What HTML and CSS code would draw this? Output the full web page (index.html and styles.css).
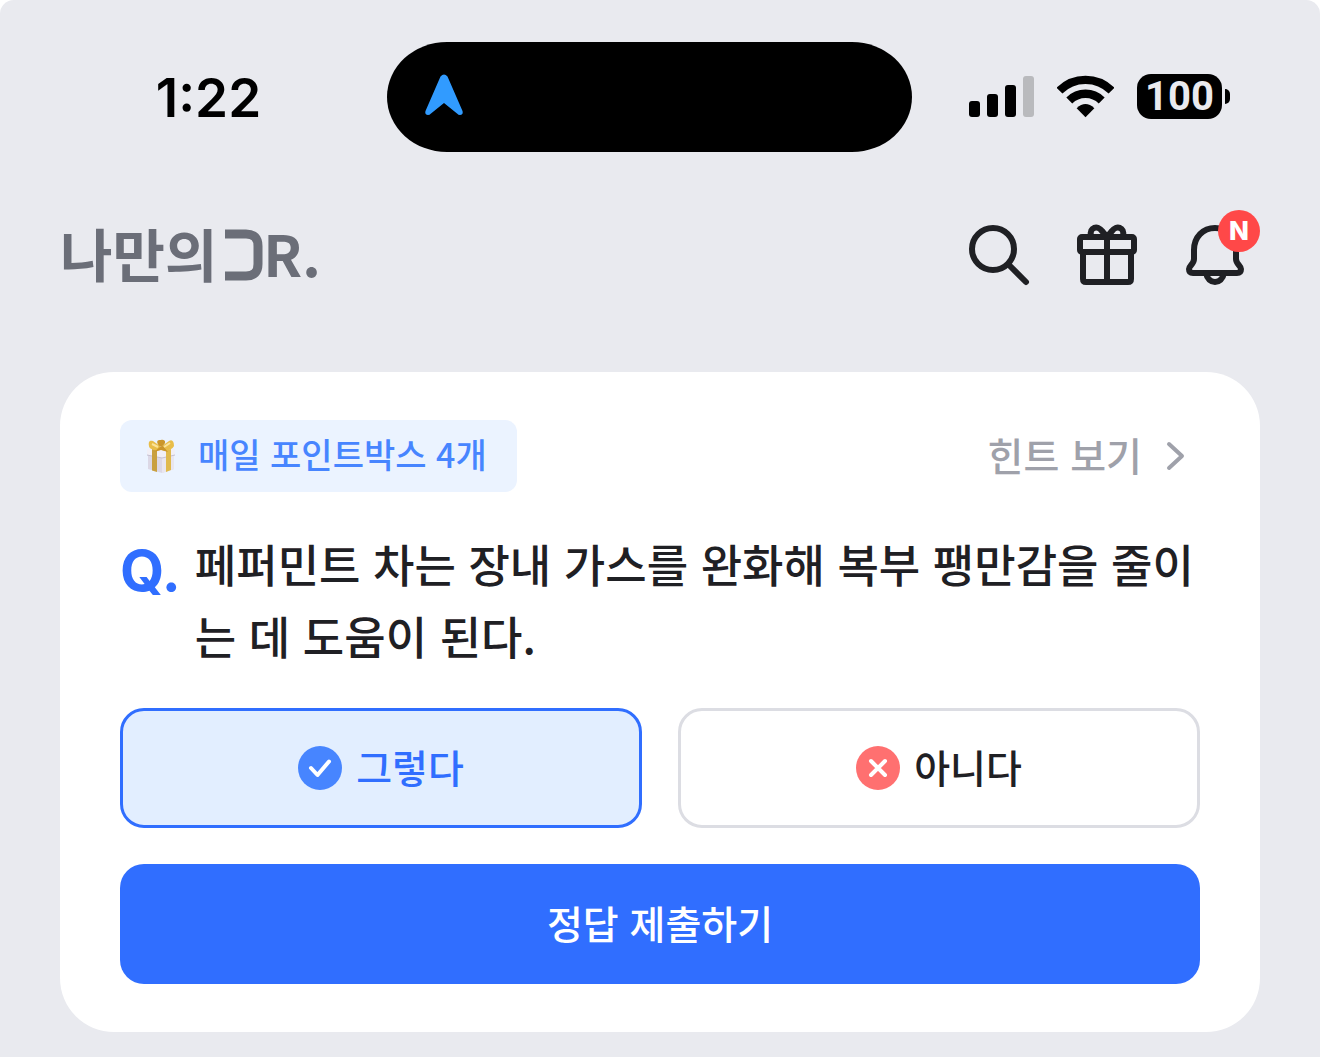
FILE: index.html
```html
<!DOCTYPE html>
<html lang="ko">
<head>
    <meta charset="UTF-8">
    <meta name="viewport" content="width=device-width, initial-scale=1.0">
    <title>나만의DR.</title>
    <link rel="stylesheet" href="styles.css">
</head>
<body>
<div class="screen">

    <!-- Status bar -->
    <div class="status-bar">
        <span class="time">1:22</span>
        <div class="island">
            <svg width="40" height="44" viewBox="0 0 40 44" aria-hidden="true">
                <path d="M16.500 3.500Q20 -0.500 23.500 3.500L38.500 38Q39.500 42 36 42Q34.500 42 33 40.500L20 30L7 40.500Q5.500 42 4 42Q0.500 42 1.500 38Z" fill="#319bff"/>
            </svg>
        </div>
        <div class="status-icons">
            <svg width="65" height="42" viewBox="0 0 65 42" aria-hidden="true">
                <rect x="0" y="26" width="11" height="16" rx="3"/>
                <rect x="18" y="19" width="11" height="23" rx="3"/>
                <rect x="36" y="10" width="11" height="32" rx="3"/>
                <rect x="54" y="1" width="11" height="41" rx="3" fill="#b9babd"/>
            </svg>
            <svg width="57" height="43" viewBox="0 0 58 43" aria-hidden="true">
                <path d="M2.500 15.500A37.500 37.500 0 0 1 55.500 15.500M12.500 25.500A23.300 23.300 0 0 1 45.500 25.500" fill="none" stroke="#000" stroke-width="8.500"/>
                <path d="M29 42.500L20 33.500Q29 25 38 33.500Z"/>
            </svg>
            <div class="battery">
                <span class="battery-level">100</span>
                <span class="battery-tip"></span>
            </div>
        </div>
    </div>

    <!-- App header -->
    <header class="header">
        <a href="#" class="logo">
            <span>나만의</span>
            <svg width="38" height="52" viewBox="0 0 38 52" aria-hidden="true">
                <path d="M0 5H21Q33 5 33 17V35Q33 47 21 47H0" fill="none" stroke="#6b6e78" stroke-width="9"/>
            </svg>
            <span>R.</span>
        </a>
        <nav class="header-menu">
            <button type="button" class="icon-button" aria-label="검색">
                <svg width="72" height="72" viewBox="0 0 72 72">
                    <circle cx="30" cy="30" r="21"/>
                    <path d="M46 46L63 63"/>
                </svg>
            </button>
            <button type="button" class="icon-button" aria-label="선물">
                <svg width="72" height="72" viewBox="0 0 72 72">
                    <rect x="9" y="18" width="54" height="15" rx="2"/>
                    <path d="M12 33V60Q12 63 15 63H57Q60 63 60 60V33M36 18V63"/>
                    <path d="M20 17C18 8 27 6 31 12L36 18L41 12C45 6 54 8 52 17"/>
                </svg>
            </button>
            <button type="button" class="icon-button" aria-label="알림">
                <svg width="72" height="72" viewBox="0 0 72 72">
                    <path d="M36 9C24 9 15 18 15 31V40C15 45 10 47 10 50Q10 54 14 54H58Q62 54 62 50C62 47 57 45 57 40V31C57 18 48 9 36 9Z"/>
                    <path d="M27 54C29 66 43 66 45 54"/>
                </svg>
                <span class="badge">N</span>
            </button>
        </nav>
    </header>

    <!-- Daily quiz -->
    <main class="quiz-card">
        <div class="quiz-top">
            <div class="point-chip">
                <svg width="30" height="36" viewBox="0 0 30 36" aria-hidden="true">
                    <path d="M2 12L15 15L28 12V31L16 35L2 31Z" fill="#dcd8e6"/>
                    <path d="M16 15L28 12V31L16 35Z" fill="#e9e6ef"/>
                    <path d="M1 11L15 8L29 11V17L16 20L1 17Z" fill="#f1eff6"/>
                    <path d="M1 17L16 20L29 17" fill="none" stroke="#c6c1d2"/>
                    <path d="M6 11L11 12V34L6 32.500Z" fill="#c9a040"/>
                    <path d="M20 12L25 11V32L20 34Z" fill="#e0b94c"/>
                    <path d="M14 12C9 13 3 11 3 8C2 3 4 2 7 3L14 8ZM16 12C20 14 27 11 28 8C28 3 26 1 23 3L16 8Z" fill="#e8bd49"/>
                    <path d="M15 9C11 7 9 1 15 2C20 1 21 6 15 9ZM14 9L8 14L15 12L22 14L17 8Z" fill="#cb962a"/>
                    <path d="M6 6L12 9M24 5L18 9" stroke="#fbe39a" stroke-width="2"/>
                </svg>
                <span>매일 포인트박스 4개</span>
            </div>
            <a href="#" class="hint-link">
                <span>힌트 보기</span>
                <svg width="20" height="32" viewBox="0 0 20 32" aria-hidden="true">
                    <path d="M3 4L16 16L3 28" fill="none" stroke="#9fa1aa" stroke-width="4" stroke-linecap="round" stroke-linejoin="round"/>
                </svg>
            </a>
        </div>

        <form class="quiz-form">
            <div class="question">
                <span class="question-mark">Q.</span>
                <p>페퍼민트 차는 장내 가스를 완화해 복부 팽만감을 줄이는 데 도움이 된다.</p>
            </div>

            <div class="answers">
                <input type="radio" id="answer-yes" name="answer" value="yes" checked>
                <label for="answer-yes" class="answer">
                    <svg width="44" height="44" viewBox="0 0 44 44" aria-hidden="true">
                        <circle cx="22" cy="22" r="22" fill="#4785ff"/>
                        <path d="M13 22L19.500 29L31 15.500" fill="none" stroke="#fff" stroke-width="4" stroke-linecap="round" stroke-linejoin="round"/>
                    </svg>
                    <span>그렇다</span>
                </label>
                <input type="radio" id="answer-no" name="answer" value="no">
                <label for="answer-no" class="answer">
                    <svg width="44" height="44" viewBox="0 0 44 44" aria-hidden="true">
                        <circle cx="22" cy="22" r="22" fill="#ff7070"/>
                        <path d="M15 15L29 29M29 15L15 29" stroke="#fff" stroke-width="4" stroke-linecap="round"/>
                    </svg>
                    <span>아니다</span>
                </label>
            </div>

            <button type="submit" class="submit-button">정답 제출하기</button>
        </form>
    </main>

</div>
</body>
</html>
```

FILE: styles.css
```css
* {
    box-sizing: border-box;
}

body {
    margin: 0;
    background-color: #fff;
    color: #1f2024;
    font-family: "Noto Sans CJK KR", sans-serif;
    font-weight: 500;
}

a {
    color: inherit;
    text-decoration: none;
}

button {
    padding: 0;
    border: none;
    background: none;
    font: inherit;
    cursor: pointer;
}

svg {
    display: block;
    flex-shrink: 0;
}

.screen {
    min-height: 100vh;
    padding-top: 42px;
    padding-bottom: 24px;
    background-color: #e9eaef;
    border-radius: 14px 14px 0 0;
}

/* Status bar */
.status-bar {
    display: grid;
    grid-template-columns: 357fr 525fr 318fr;
    align-items: center;
    padding: 0 90px 0 30px;
    color: #000;
}

.time {
    justify-self: center;
    padding-top: 2px;
    font-family: Inter, sans-serif;
    font-size: 53px;
    font-weight: 600;
    line-height: 60px;
}

.island {
    display: flex;
    align-items: center;
    height: 110px;
    padding: 0 37px 4px;
    background-color: #000;
    border-radius: 60px / 55px;
}

.status-icons {
    display: flex;
    align-items: center;
    justify-content: flex-end;
    gap: 23px;
    padding-bottom: 2px;
}

.battery {
    display: flex;
    align-items: center;
    gap: 3px;
}

.battery-level {
    width: 85px;
    border-radius: 14px;
    background-color: #000;
    color: #e9eaef;
    font-family: Roboto, sans-serif;
    font-size: 40px;
    font-weight: 700;
    line-height: 45px;
    text-align: center;
}

.battery-tip {
    width: 5px;
    height: 15px;
    border-radius: 0 8px 8px 0;
    background-color: #000;
}

/* Header */
.header {
    display: flex;
    align-items: center;
    justify-content: space-between;
    margin-top: 67px;
    padding: 0 69px 0 60px;
}

.logo {
    display: flex;
    align-items: center;
    gap: 8px;
    color: #6b6e78;
    font-size: 57px;
    font-weight: 700;
}

.logo span {
    padding-bottom: 6px;
    line-height: 66px;
}

.logo svg + span {
    margin-left: -8px;
}

.header-menu {
    display: flex;
    gap: 36px;
}

.icon-button {
    position: relative;
}

.icon-button svg {
    fill: none;
    stroke: #1f2024;
    stroke-width: 6;
    stroke-linecap: round;
    stroke-linejoin: round;
}

.badge {
    position: absolute;
    top: -9px;
    right: -9px;
    width: 42px;
    border-radius: 50%;
    background-color: #ff4848;
    color: #fff;
    font-family: Inter, sans-serif;
    font-size: 26px;
    font-weight: 800;
    line-height: 42px;
    text-align: center;
}

/* Quiz card */
.quiz-card {
    margin: 81px 60px 0;
    padding: 48px 60px;
    background-color: #fff;
    border-radius: 54px;
}

.quiz-top {
    display: flex;
    align-items: center;
    justify-content: space-between;
}

.point-chip {
    display: flex;
    align-items: center;
    gap: 22px;
    height: 72px;
    padding: 0 30px 0 26px;
    border-radius: 12px;
    background-color: #ebf3ff;
    color: #4785ff;
    font-size: 34px;
}

.hint-link {
    display: flex;
    align-items: center;
    gap: 24px;
    padding-right: 14px;
    color: #9fa1aa;
    font-size: 39px;
}

.point-chip span,
.hint-link span,
.answer span {
    padding-bottom: 5px;
    line-height: 60px;
}

.quiz-form {
    display: flex;
    flex-direction: column;
    gap: 36px;
    margin-top: 36px;
}

.question {
    display: flex;
    gap: 14px;
    font-size: 45px;
    line-height: 72px;
}

.question p {
    margin: 0;
    word-break: break-all;
}

.question-mark {
    color: #306eff;
    font-family: Inter, sans-serif;
    font-size: 57px;
    font-weight: 700;
    line-height: 86px;
}

.answers {
    display: flex;
    gap: 36px;
}

.answers input {
    position: absolute;
    opacity: 0;
}

.answer {
    display: flex;
    flex: 1;
    align-items: center;
    justify-content: center;
    gap: 14px;
    height: 120px;
    border: 3px solid #dcdde3;
    border-radius: 24px;
    font-size: 39px;
    cursor: pointer;
}

.answers input:checked + .answer {
    border-color: #306eff;
    background-color: #e2eeff;
    color: #306eff;
}

.submit-button {
    height: 120px;
    padding-bottom: 5px;
    border-radius: 24px;
    background-color: #306eff;
    color: #fff;
    font-size: 39px;
}
```
